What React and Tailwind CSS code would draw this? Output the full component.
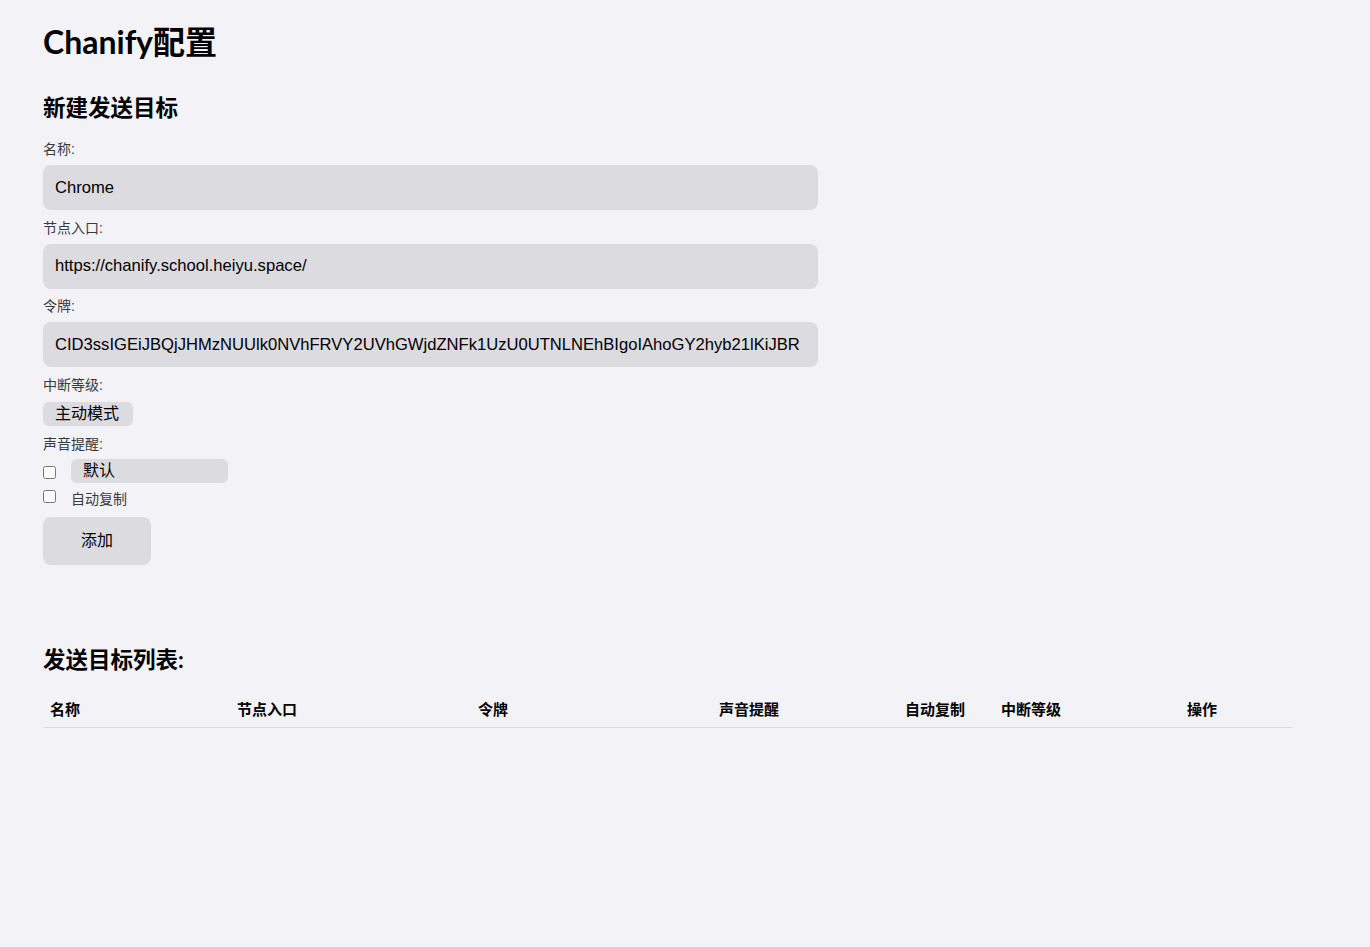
import { useState } from 'react';

const FONT = "font-['Liberation_Sans','Noto_Sans_CJK_SC',sans-serif]";
const HEAD = "font-['Lato','Noto_Sans_CJK_SC',sans-serif]";

const COLUMNS = [
  { label: '名称', w: 'w-[187px]' },
  { label: '节点入口', w: 'w-[241px]' },
  { label: '令牌', w: 'w-[241px]' },
  { label: '声音提醒', w: 'w-[186px]' },
  { label: '自动复制', w: 'w-[96px]' },
  { label: '中断等级', w: 'w-[186px]' },
  { label: '操作', w: 'w-[113px]' },
];

function Field({ label, value, onChange }) {
  return (
    <div className="flex flex-col">
      <label className="h-[24px] text-sm text-[#3a3a3c] leading-4">{label}</label>
      <input
        value={value}
        onChange={(e) => onChange(e.target.value)}
        className="w-[775px] h-[45px] rounded-lg bg-[#dcdbe0] px-3 text-[16.6px] text-black outline-none"
      />
    </div>
  );
}

export default function App() {
  const [name, setName] = useState('Chrome');
  const [endpoint, setEndpoint] = useState('https://chanify.school.heiyu.space/');
  const [token, setToken] = useState('CID3ssIGEiJBQjJHMzNUUlk0NVhFRVY2UVhGWjdZNFk1UzU0UTNLNEhBIgoIAhoGY2hyb21lKiJBR');

  return (
    <div className={`min-h-[947px] bg-[#f2f2f7] px-[43px] pt-[20px] text-black ${FONT}`}>
      <h1 className={`text-[32px] font-bold leading-[44px] ${HEAD}`}>Chanify配置</h1>

      <h2 className={`mt-[28px] text-[22.5px] font-bold leading-8 ${HEAD}`}>新建发送目标</h2>

      <div className="mt-[17px] flex flex-col gap-[9.5px]">
        <Field label="名称:" value={name} onChange={setName} />
        <Field label="节点入口:" value={endpoint} onChange={setEndpoint} />
        <Field label="令牌:" value={token} onChange={setToken} />
      </div>

      <div className="mt-[10px] text-sm text-[#3a3a3c] leading-4">中断等级:</div>
      <button className="mt-[9px] h-6 w-[90px] rounded-md bg-[#dcdbe0] text-left pl-3 text-base leading-6">主动模式</button>

      <div className="mt-[10px] text-sm text-[#3a3a3c] leading-4">声音提醒:</div>
      <div className="mt-[7px] flex items-center h-6">
        <input type="checkbox" className="w-[13px] h-[13px] m-0 mt-[2px]" />
        <div className="ml-[15px] h-6 w-[157px] rounded-md bg-[#dcdbe0] pl-3 text-base leading-6">默认</div>
      </div>
      <div className="mt-[4px] flex items-start h-5">
        <input type="checkbox" className="w-[13px] h-[13px] m-0 mt-[3px]" />
        <label className="ml-[15px] mt-[4px] text-sm text-[#3a3a3c] leading-4">自动复制</label>
      </div>
      <button className="mt-[10px] block h-12 w-[108px] rounded-lg bg-[#dcdbe0] text-base">添加</button>

      <h2 className={`mt-[79px] text-[22.5px] font-bold leading-8 ${HEAD}`}>发送目标列表:</h2>

      <table className="mt-[16px] w-[1250px] border-collapse text-[15px]">
        <thead>
          <tr className="border-b border-[#dcdbe0]">
            {COLUMNS.map((c) => (
              <th key={c.label} className={`${c.w} px-[7px] pt-[10px] pb-[9px] text-left font-bold leading-4`}>
                {c.label}
              </th>
            ))}
          </tr>
        </thead>
        <tbody />
      </table>
    </div>
  );
}
